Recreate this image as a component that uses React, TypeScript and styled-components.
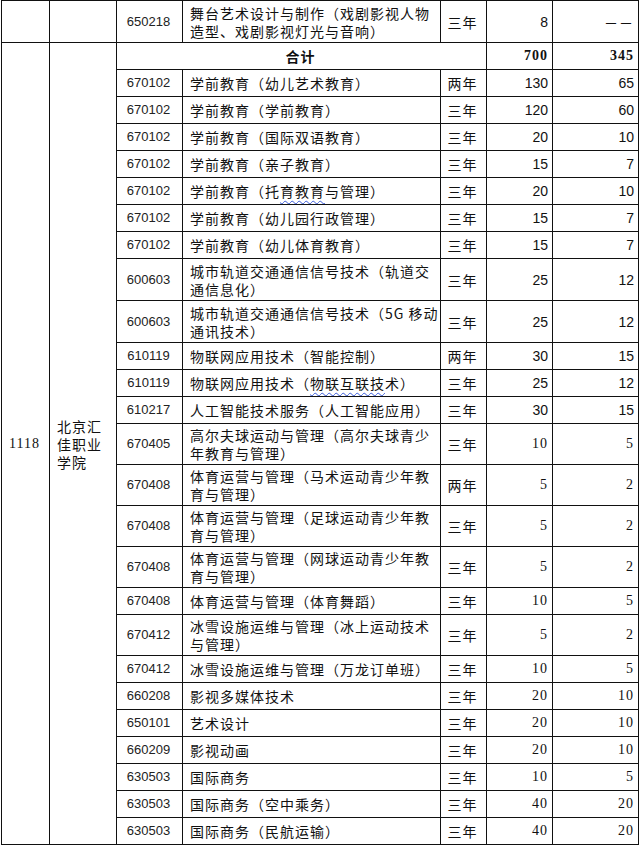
import React from 'react';
import styled, { createGlobalStyle } from 'styled-components';

const GlobalStyle = createGlobalStyle`
	html, body {
		margin: 0;
		padding: 0;
		background: #ffffff;
	}
	body {
		font-family: 'Noto Sans CJK SC', 'Liberation Sans', sans-serif;
		color: #111111;
	}
`;

const Page = styled.div`
	width: 640px;
	height: 846px;
	overflow: hidden;
	padding-left: 1px;
	box-sizing: border-box;
`;

const Table = styled.table`
	width: 637px;
	table-layout: fixed;
	border-collapse: collapse;
	border: 1px solid #111111;
`;

const Row = styled.tr<{ $h: number }>`
	height: ${(p) => p.$h}px;
`;

const Cell = styled.td<{ $align?: 'left' | 'center' | 'right'; $bold?: boolean; $num?: boolean; $serif?: boolean }>`
	border: 1px solid #111111;
	padding: 0 ${(p) => (p.$align === 'right' ? '4px' : '6px')} 0 ${(p) => (p.$align === 'left' ? '7px' : '4px')};
	text-align: ${(p) => p.$align || 'center'};
	vertical-align: middle;
	font-size: 14px;
	line-height: 18px;
	letter-spacing: ${(p) => (p.$num ? '0' : '1px')};
	font-weight: ${(p) => (p.$bold ? 700 : 400)};
	font-family: ${(p) =>
		p.$serif
			? "'Liberation Serif', serif"
			: p.$num
				? "'Liberation Sans', sans-serif"
				: "'Noto Sans CJK SC', 'Liberation Sans', sans-serif"};
	color: #111111;
	white-space: nowrap;
	overflow: hidden;
`;

const Code = styled(Cell)`
	font-size: 13px;
	color: #222222;
`;

const Spell = styled.span`
	text-decoration: underline wavy #3a5bd9;
	text-decoration-thickness: 1px;
	text-underline-offset: 3px;
`;

type Item = {
	code: string;
	name: React.ReactNode;
	years: string;
	plan: string;
	share: string;
	h?: number;
	serif?: boolean;
};

const items: Item[] = [
	{ code: '670102', name: '学前教育（幼儿艺术教育）', years: '两年', plan: '130', share: '65' },
	{ code: '670102', name: '学前教育（学前教育）', years: '三年', plan: '120', share: '60' },
	{ code: '670102', name: '学前教育（国际双语教育）', years: '三年', plan: '20', share: '10' },
	{ code: '670102', name: '学前教育（亲子教育）', years: '三年', plan: '15', share: '7' },
	{
		code: '670102',
		name: (
			<>
				学前教育（托<Spell>育教育</Spell>与管理）
			</>
		),
		years: '三年',
		plan: '20',
		share: '10'
	},
	{ code: '670102', name: '学前教育（幼儿园行政管理）', years: '三年', plan: '15', share: '7' },
	{ code: '670102', name: '学前教育（幼儿体育教育）', years: '三年', plan: '15', share: '7' },
	{
		code: '600603',
		name: (
			<>
				城市轨道交通通信信号技术（轨道交
				<br />
				通信息化）
			</>
		),
		years: '三年',
		plan: '25',
		share: '12',
		h: 42
	},
	{
		code: '600603',
		name: (
			<>
				城市轨道交通通信信号技术（5G 移动
				<br />
				通讯技术）
			</>
		),
		years: '三年',
		plan: '25',
		share: '12',
		h: 42
	},
	{ code: '610119', name: '物联网应用技术（智能控制）', years: '两年', plan: '30', share: '15' },
	{
		code: '610119',
		name: (
			<>
				物联网应用技术（<Spell>物联互联技</Spell>术）
			</>
		),
		years: '三年',
		plan: '25',
		share: '12'
	},
	{ code: '610217', name: '人工智能技术服务（人工智能应用）', years: '三年', plan: '30', share: '15' },
	{
		code: '670405',
		name: (
			<>
				高尔夫球运动与管理（高尔夫球青少
				<br />
				年教育与管理）
			</>
		),
		years: '三年',
		plan: '10',
		share: '5',
		h: 41,
		serif: true
	},
	{
		code: '670408',
		name: (
			<>
				体育运营与管理（马术运动青少年教
				<br />
				育与管理）
			</>
		),
		years: '两年',
		plan: '5',
		share: '2',
		h: 41,
		serif: true
	},
	{
		code: '670408',
		name: (
			<>
				体育运营与管理（足球运动青少年教
				<br />
				育与管理）
			</>
		),
		years: '三年',
		plan: '5',
		share: '2',
		h: 41,
		serif: true
	},
	{
		code: '670408',
		name: (
			<>
				体育运营与管理（网球运动青少年教
				<br />
				育与管理）
			</>
		),
		years: '三年',
		plan: '5',
		share: '2',
		h: 41,
		serif: true
	},
	{ code: '670408', name: '体育运营与管理（体育舞蹈）', years: '三年', plan: '10', share: '5', serif: true },
	{
		code: '670412',
		name: (
			<>
				冰雪设施运维与管理（冰上运动技术
				<br />
				与管理）
			</>
		),
		years: '三年',
		plan: '5',
		share: '2',
		h: 41,
		serif: true
	},
	{ code: '670412', name: '冰雪设施运维与管理（万龙订单班）', years: '三年', plan: '10', share: '5', serif: true },
	{ code: '660208', name: '影视多媒体技术', years: '三年', plan: '20', share: '10', serif: true },
	{ code: '650101', name: '艺术设计', years: '三年', plan: '20', share: '10', serif: true },
	{ code: '660209', name: '影视动画', years: '三年', plan: '20', share: '10', serif: true },
	{ code: '630503', name: '国际商务', years: '三年', plan: '10', share: '5', serif: true },
	{ code: '630503', name: '国际商务（空中乘务）', years: '三年', plan: '40', share: '20', serif: true },
	{ code: '630503', name: '国际商务（民航运输）', years: '三年', plan: '40', share: '20', serif: true }
];

export default function App() {
	return (
		<Page>
			<GlobalStyle />
			<Table>
				<colgroup>
					<col style={{ width: 48 }} />
					<col style={{ width: 67 }} />
					<col style={{ width: 66 }} />
					<col style={{ width: 258 }} />
					<col style={{ width: 46 }} />
					<col style={{ width: 66 }} />
					<col style={{ width: 86 }} />
				</colgroup>
				<tbody>
					<Row $h={42}>
						<Cell />
						<Cell />
						<Code $num>650218</Code>
						<Cell $align='left'>
							舞台艺术设计与制作（戏剧影视人物
							<br />
							造型、戏剧影视灯光与音响）
						</Cell>
						<Cell>三年</Cell>
						<Cell $align='right' $num>
							8
						</Cell>
						<Cell $align='right'>－－</Cell>
					</Row>
					<Row $h={27}>
						<Cell rowSpan={items.length + 1} $serif>
							1118
						</Cell>
						<Cell rowSpan={items.length + 1} $align='left'>
							北京汇
							<br />
							佳职业
							<br />
							学院
						</Cell>
						<Cell colSpan={3} $bold>
							合计
						</Cell>
						<Cell $align='right' $bold $serif>
							700
						</Cell>
						<Cell $align='right' $bold $serif>
							345
						</Cell>
					</Row>
					{items.map((it, i) => (
						<Row key={i} $h={it.h ?? 27}>
							<Code $num>{it.code}</Code>
							<Cell $align='left'>{it.name}</Cell>
							<Cell>{it.years}</Cell>
							<Cell $align='right' $num={!it.serif} $serif={it.serif}>
								{it.plan}
							</Cell>
							<Cell $align='right' $num={!it.serif} $serif={it.serif}>
								{it.share}
							</Cell>
						</Row>
					))}
				</tbody>
			</Table>
		</Page>
	);
}
